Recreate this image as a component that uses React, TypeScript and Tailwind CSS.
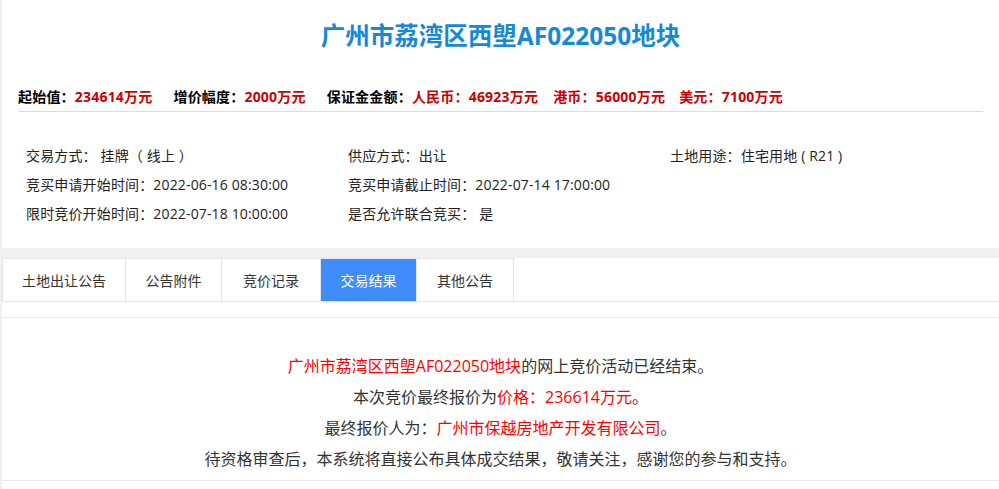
import React from 'react';

const infoItems = [
  ['交易方式：', ' 挂牌（ 线上 ）'],
  ['供应方式：', '出让'],
  ['土地用途：', '住宅用地 ( R21 )'],
  ['竞买申请开始时间：', '2022-06-16 08:30:00'],
  ['竞买申请截止时间：', '2022-07-14 17:00:00'],
  ['', ''],
  ['限时竞价开始时间：', '2022-07-18 10:00:00'],
  ['是否允许联合竞买：', ' 是'],
  ['', ''],
];

const tabs = [
  { name: '土地出让公告', width: 'w-[124px] border-l' },
  { name: '公告附件', width: 'w-[96px]' },
  { name: '竞价记录', width: 'w-[99px]' },
  { name: '交易结果', width: 'w-[96px]', active: true },
  { name: '其他公告', width: 'w-[97px]' },
];

export default function App() {
  return (
    <div
      className="min-h-screen bg-[#f0f0f0] pl-[2px] text-[#333]"
      style={{ fontFamily: '"Open Sans", "Noto Sans CJK SC", sans-serif' }}
    >
      {/* header panel */}
      <div className="h-[248px] bg-white">
        <div className="flex h-[72px] items-center justify-center">
          <h1 className="text-[24.5px] font-bold text-[#1589d6]">广州市荔湾区西塱AF022050地块</h1>
        </div>

        <div className="ml-[16px] mr-[16px] mt-[13px] border-b border-[#dcdce4] pb-[2px]">
          <div className="flex h-[24px] items-center text-[14px] font-bold leading-[24px] tracking-[0.2px] text-black">
            <span>
              起始值：<span className="text-[#cc0000]">234614万元</span>
            </span>
            <span className="ml-[21px]">
              增价幅度：<span className="text-[#cc0000]">2000万元</span>
            </span>
            <span className="ml-[21px]">
              保证金金额：<span className="text-[#cc0000]">人民币：46923万元</span>
            </span>
            <span className="ml-[15px] text-[#cc0000]">港币：56000万元</span>
            <span className="ml-[14px] text-[#cc0000]">美元：7100万元</span>
          </div>
        </div>

        <div className="mt-[29px] grid grid-cols-[322px_322px_1fr] pl-[24px] text-[14px] leading-[29px] tracking-[0.15px] text-[#222]">
          {infoItems.map(([label, value], i) => (
            <div key={i} className="whitespace-pre">
              {label}
              {value}
            </div>
          ))}
        </div>
      </div>

      {/* tabs + result */}
      <div className="mt-[10px] bg-white pb-[8px]">
        <div className="flex h-[44px] border-b border-[#e4e4ec]">
          {tabs.map((tab) => (
            <div
              key={tab.name}
              className={`${tab.width} flex items-center justify-center border-r border-t border-[#e4e4ec] text-[14px] ${
                tab.active ? 'bg-[#408cfa] text-white' : 'bg-white text-[#333]'
              }`}
            >
              {tab.name}
            </div>
          ))}
        </div>

        <div className="mt-[15px] border-y border-[#e8e8e8] pb-[5px] pt-[33px] text-center text-[16px] leading-[31px] text-[#333]">
          <p>
            <span className="text-[#ff0000]">广州市荔湾区西塱AF022050地块</span>的网上竞价活动已经结束。
          </p>
          <p>
            本次竞价最终报价为<span className="text-[#ff0000]">价格：236614万元</span>。
          </p>
          <p>
            最终报价人为：<span className="text-[#ff0000]">广州市保越房地产开发有限公司</span>。
          </p>
          <p>待资格审查后，本系统将直接公布具体成交结果，敬请关注，感谢您的参与和支持。</p>
        </div>
      </div>
    </div>
  );
}
